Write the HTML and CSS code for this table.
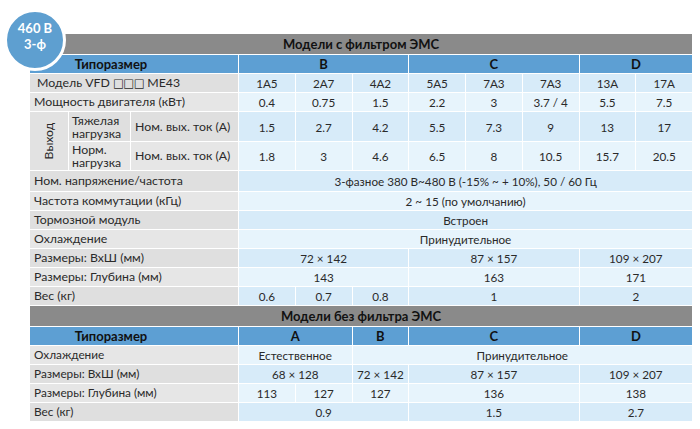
FILE: index.html
```html
<!DOCTYPE html>
<html lang="ru">
<head>
<meta charset="utf-8">
<link rel="stylesheet" href="styles.css">
</head>
<body>
<div class="page">
  <div class="badge"><span>460 В</span><span>3-ф</span></div>
  <table class="spec">
    <colgroup>
      <col class="c-out"><col class="c-load"><col class="c-param">
      <col class="c-v"><col class="c-v"><col class="c-v"><col class="c-v"><col class="c-v"><col class="c-v"><col class="c-v"><col class="c-v">
    </colgroup>
    <tbody>
      <tr class="title"><td colspan="11">Модели с фильтром ЭМС</td></tr>
      <tr class="head"><td colspan="3" class="tp">Типоразмер</td><td colspan="3">B</td><td colspan="3">C</td><td colspan="2">D</td></tr>
      <tr class="dark"><td colspan="3" class="lbl model">Модель VFD <span class="sq">□□□</span> ME43</td><td>1A5</td><td>2A7</td><td>4A2</td><td>5A5</td><td>7A3</td><td>7A3</td><td>13A</td><td>17A</td></tr>
      <tr class="light"><td colspan="3" class="lbl">Мощность двигателя (кВт)</td><td>0.4</td><td>0.75</td><td>1.5</td><td>2.2</td><td>3</td><td>3.7 / 4</td><td>5.5</td><td>7.5</td></tr>
      <tr class="dark tall"><td rowspan="2" class="lbl vert"><span>Выход</span></td><td class="lbl two">Тяжелая нагрузка</td><td class="lbl">Ном. вых. ток (А)</td><td>1.5</td><td>2.7</td><td>4.2</td><td>5.5</td><td>7.3</td><td>9</td><td>13</td><td>17</td></tr>
      <tr class="light tall2"><td class="lbl two">Норм. нагрузка</td><td class="lbl">Ном. вых. ток (А)</td><td>1.8</td><td>3</td><td>4.6</td><td>6.5</td><td>8</td><td>10.5</td><td>15.7</td><td>20.5</td></tr>
      <tr class="dark r21"><td colspan="3" class="lbl">Ном. напряжение/частота</td><td colspan="8">3-фазное 380 В~480 В (-15% ~ + 10%), 50 / 60 Гц</td></tr>
      <tr class="light"><td colspan="3" class="lbl">Частота коммутации (кГц)</td><td colspan="8">2 ~ 15 (по умолчанию)</td></tr>
      <tr class="dark"><td colspan="3" class="lbl">Тормозной модуль</td><td colspan="8">Встроен</td></tr>
      <tr class="light"><td colspan="3" class="lbl">Охлаждение</td><td colspan="8">Принудительное</td></tr>
      <tr class="dark"><td colspan="3" class="lbl">Размеры: ВхШ (мм)</td><td colspan="3">72 × 142</td><td colspan="3">87 × 157</td><td colspan="2">109 × 207</td></tr>
      <tr class="light"><td colspan="3" class="lbl">Размеры: Глубина (мм)</td><td colspan="3">143</td><td colspan="3">163</td><td colspan="2">171</td></tr>
      <tr class="dark"><td colspan="3" class="lbl">Вес (кг)</td><td>0.6</td><td>0.7</td><td>0.8</td><td colspan="3">1</td><td colspan="2">2</td></tr>

      <tr class="title"><td colspan="11">Модели без фильтра ЭМС</td></tr>
      <tr class="head"><td colspan="3" class="tp">Типоразмер</td><td colspan="2">A</td><td>B</td><td colspan="3">C</td><td colspan="2">D</td></tr>
      <tr class="light sm"><td colspan="3" class="lbl">Охлаждение</td><td colspan="2">Естественное</td><td colspan="6">Принудительное</td></tr>
      <tr class="dark sm"><td colspan="3" class="lbl">Размеры: ВхШ (мм)</td><td colspan="2">68 × 128</td><td>72 × 142</td><td colspan="3">87 × 157</td><td colspan="2">109 × 207</td></tr>
      <tr class="light sm"><td colspan="3" class="lbl">Размеры: Глубина (мм)</td><td>113</td><td>127</td><td>127</td><td colspan="3">136</td><td colspan="2">138</td></tr>
      <tr class="dark sm"><td colspan="3" class="lbl">Вес (кг)</td><td colspan="3">0.9</td><td colspan="3">1.5</td><td colspan="2">2.7</td></tr>
    </tbody>
  </table>
</div>
</body>
</html>
```

FILE: styles.css
```css
html, body {
  margin: 0;
  padding: 0;
  background: #ffffff;
}

.page {
  position: relative;
  width: 700px;
  height: 429px;
  padding: 33px 0 0 29px;
  box-sizing: border-box;
  font-family: Lato, "Open Sans", "Liberation Sans", sans-serif;
  color: #222;
}

.badge {
  position: absolute;
  left: 4px;
  top: 9px;
  width: 56px;
  height: 49px;
  padding-bottom: 7px;
  box-sizing: content-box;
  border-radius: 50%;
  background: #5e9fd0;
  border: 3px solid #ffffff;
  display: flex;
  flex-direction: column;
  align-items: center;
  justify-content: center;
  color: #ffffff;
  font-weight: 700;
  font-size: 13px;
  line-height: 15.5px;
  z-index: 2;
}

.spec {
  width: 663px;
  table-layout: fixed;
  border-collapse: collapse;
  font-size: 11.7px;
}

.c-out { width: 39px; }
.c-load { width: 62px; }
.c-param { width: 108px; }
.c-v { width: 56.75px; }

.spec td {
  border: 1px solid #ffffff;
  padding: 0;
  height: 18px;
  text-align: center;
  vertical-align: middle;
  white-space: nowrap;
  line-height: 14px;
  color: #2a2a2a;
}

.spec .title td {
  background: #8a8a8a;
  color: #111;
  font-weight: 700;
  font-size: 13px;
  height: 20px;
}

.spec .head td {
  background: #5d9fd3;
  color: #111;
  font-weight: 700;
  font-size: 13px;
  height: 18px;
}

.spec .head td.tp { padding-right: 46px; }

.dark td { background: #d7ebf9; }
.light td { background: #e7f4fc; }

.spec td.lbl {
  text-align: left;
  padding-left: 4px;
  font-size: 12.3px;
}
.dark td.lbl { background: #dfdfdf; }
.light td.lbl { background: #e6e6e6; }

.spec td.model { padding-left: 7px; }
.sq {
  font-family: "DejaVu Sans", sans-serif;
  font-size: 11.5px;
  letter-spacing: -0.5px;
}

.sm td { font-size: 11.7px; }
.spec .sm td.lbl { font-size: 11.8px; }

.tall td { height: 29px; }
.tall2 td { height: 28px; }
.r21 td { height: 20px; }

.spec td.two {
  white-space: normal;
  line-height: 13px;
  padding-left: 3px;
}

.spec td.vert {
  text-align: center;
  padding: 0;
  background: #e2e2e2;
}
.vert span {
  display: inline-block;
  transform: rotate(-90deg);
  font-size: 12.3px;
}
```
